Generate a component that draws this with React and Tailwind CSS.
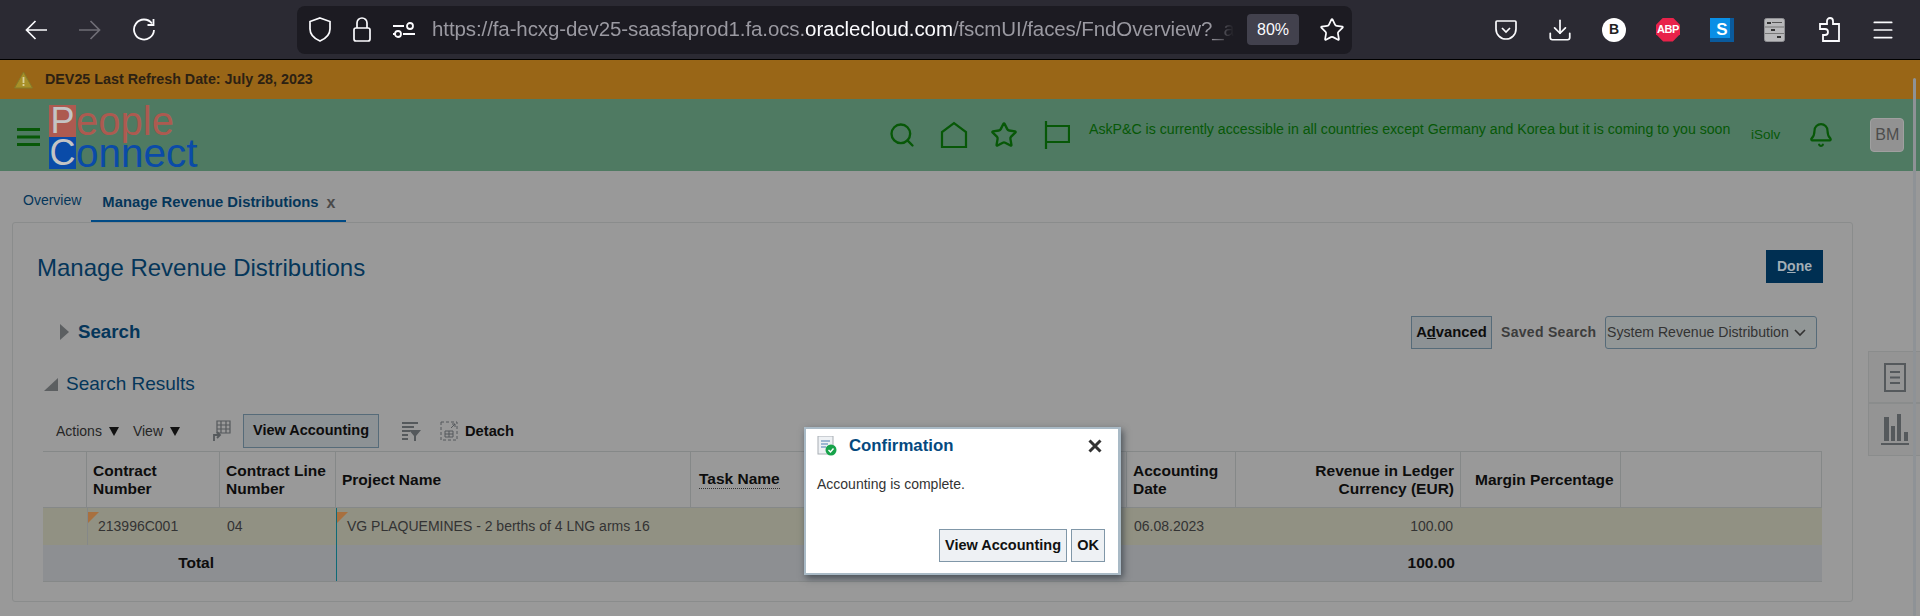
import { Star, Download, Menu, Search, Bell } from "lucide-react";

const cols = "grid grid-cols-[44px_133px_116px_355px_436px_109px_225px_160px_201px]";

function HeadCell({ children, className = "" }) {
  return (
    <div className={`flex items-center border-r border-[#858888] px-[6px] text-[15.5px] leading-[18px] font-bold text-[#0d0d0d] ${className}`}>
      {children}
    </div>
  );
}

function Corner() {
  return <div className="absolute left-0 top-[4px] h-0 w-0 border-t-[11px] border-r-[11px] border-t-[#a8703f] border-r-transparent" />;
}

function TreeIcon() {
  return (
    <svg width="21" height="24" viewBox="0 0 21 24">
      <rect x="0.5" y="0.5" width="20" height="23" rx="2" fill="#b9b9bb" stroke="#8f8f93" />
      <rect x="3" y="4" width="4" height="2" fill="#333" />
      <rect x="8" y="4" width="10" height="1" fill="#555" />
      <rect x="7" y="11" width="4" height="2" fill="#333" />
      <rect x="1" y="8.5" width="19" height="1" fill="#777" />
      <rect x="1" y="15" width="19" height="1" fill="#777" />
      <rect x="13" y="18" width="4" height="2" fill="#333" />
    </svg>
  );
}

export default function App() {
  return (
    <div className="relative h-[616px] w-[1920px] overflow-hidden bg-[#999999] font-['Liberation_Sans',Arial,sans-serif]">
      {/* browser toolbar */}
      <div className="flex h-[60px] items-center border-b border-black bg-[#2b2a33] pl-[25px]">
        <svg width="22" height="20" viewBox="0 0 22 20" fill="none" stroke="#fbfbfe" strokeWidth="1.7">
          <path d="M22 10H2M10.5 1L1.5 10l9 9" />
        </svg>
        <svg width="22" height="20" viewBox="0 0 22 20" fill="none" stroke="#6f6e76" strokeWidth="1.7" className="ml-[32px]">
          <path d="M0 10h20M11.5 1l9 9-9 9" />
        </svg>
        <svg width="22" height="23" viewBox="0 0 22 23" fill="none" stroke="#fbfbfe" strokeWidth="1.8" className="ml-[32px]">
          <path d="M19 5.5A10 10 0 1 0 21 12" />
          <path d="M20.5 1v6h-6" />
        </svg>
        <div className="ml-[142px] flex h-[48px] w-[1055px] items-center rounded-[8px] bg-[#1c1b22] pl-[12px]">
          <svg width="22" height="25" viewBox="0 0 22 25" fill="none" stroke="#fbfbfe" strokeWidth="1.7">
            <path d="M11 1l10 3.5V12c0 6-4 9.5-10 12C5 21.5 1 18 1 12V4.5z" />
          </svg>
          <svg width="18" height="25" viewBox="0 0 18 25" fill="none" stroke="#fbfbfe" strokeWidth="1.7" className="ml-[22px]">
            <path d="M4 11V6a5 5 0 0 1 10 0v5" />
            <rect x="1" y="11" width="16" height="13" rx="2" />
          </svg>
          <svg width="22" height="18" viewBox="0 0 22 18" fill="none" stroke="#fbfbfe" strokeWidth="1.8" className="ml-[22px]">
            <path d="M0 5h11M0 13h2M10 13h12" />
            <circle cx="17" cy="5" r="3" />
            <circle cx="5" cy="13" r="3" />
          </svg>
          <div className="ml-[17px] w-[802px] overflow-hidden whitespace-nowrap text-[20.5px] tracking-[-0.1px] text-[#9a99a1] [mask-image:linear-gradient(to_left,transparent,black_24px)]">
            https://fa-hcxg-dev25-saasfaprod1.fa.ocs.<span className="text-[#fbfbfe]">oraclecloud.com</span>/fscmUI/faces/FndOverview?_a
          </div>
          <div className="ml-[13px] flex h-[31px] w-[52px] items-center justify-center rounded-[4px] bg-[#42414d] text-[16px] text-[#fbfbfe]">80%</div>
          <Star size={26} strokeWidth={1.6} className="ml-[20px] text-[#fbfbfe]" />
        </div>
        <div className="ml-[142px] flex items-center gap-[30px]">
          <svg width="24" height="24" viewBox="0 0 24 24" fill="none" stroke="#fbfbfe" strokeWidth="1.7">
            <path d="M3 3h18a1 1 0 0 1 1 1v7a10 10 0 0 1-20 0V4a1 1 0 0 1 1-1z" />
            <path d="M8 10l4 4 4-4" />
          </svg>
          <Download size={26} strokeWidth={1.6} className="-mx-[1px] text-[#fbfbfe]" />
          <div className="flex h-[24px] w-[24px] items-center justify-center rounded-full bg-white text-[14px] font-bold text-[#222]">B</div>
          <div className="flex h-[24px] w-[24px] items-center justify-center bg-[#e8224a] text-[11px] font-bold tracking-[-0.4px] text-white [clip-path:polygon(30%_0,70%_0,100%_30%,100%_70%,70%_100%,30%_100%,0_70%,0_30%)]">ABP</div>
          <div className="flex h-[24px] w-[24px] items-center justify-center bg-[#0a8fe6] text-[17px] font-bold text-white shadow-[inset_-4px_-4px_0_#0a5a9c]">S</div>
          <TreeIcon />
          <svg width="21" height="25" viewBox="0 0 21 25" fill="none" stroke="#fbfbfe" strokeWidth="1.8" className="ml-[4px]">
            <path d="M8 7V4a3 3 0 0 1 6 0v3h6v17H4v-6h2a3 3 0 0 0 0-6H1V7z" />
          </svg>
          <Menu size={26} strokeWidth={1.6} className="text-[#fbfbfe]" />
        </div>
      </div>

      {/* refresh notice */}
      <div className="flex h-[39px] items-center bg-[#996617] pl-[14px]">
        <svg width="19" height="18" viewBox="0 0 19 18">
          <path d="M9.5 1L18.5 17H.5z" fill="#a89028" stroke="#857a2a" />
          <rect x="8.6" y="6" width="1.8" height="6" fill="#d9cf9a" />
          <rect x="8.6" y="13" width="1.8" height="2" fill="#d9cf9a" />
        </svg>
        <span className="ml-[12px] text-[14.3px] font-bold text-[#2c2113]">DEV25 Last Refresh Date: July 28, 2023</span>
      </div>

      {/* app header */}
      <div className="flex h-[72px] items-center overflow-hidden bg-[#4f7a62] pl-[17px]">
        <svg width="23" height="18" viewBox="0 0 23 18" fill="#075807" className="mt-[3px]">
          <rect width="23" height="3" />
          <rect y="7.5" width="23" height="3" />
          <rect y="15" width="23" height="3" />
        </svg>
        <div className="ml-[9px] flex h-[66px] w-[152px] flex-col self-start pt-[6px]">
          <div className="flex h-[34px] items-start text-[40px] leading-[32px] text-[#ad5a50]">
            <span className="flex h-[32px] w-[27px] items-center justify-center bg-[#ad5a50] text-[36px] text-[#c4c4c4]">P</span>eople
          </div>
          <div className="flex h-[32px] items-start text-[40.5px] leading-[32px] text-[#0a4ba8]">
            <span className="flex h-[32px] w-[27px] items-center justify-center bg-[#0a4ba8] text-[36px] text-[#c4c4c4]">C</span>onnect
          </div>
        </div>
        <div className="ml-[687px] flex items-center text-[#075807]">
          <Search size={28} strokeWidth={2} />
          <svg width="28" height="28" viewBox="0 0 28 28" fill="none" stroke="currentColor" strokeWidth="2.2" className="ml-[24px]">
            <path d="M2 26V11L14 2l12 9v15z" />
          </svg>
          <Star size={28} strokeWidth={2} className="ml-[22px]" />
          <svg width="26" height="28" viewBox="0 0 26 28" fill="none" stroke="currentColor" strokeWidth="2.2" className="ml-[26px]">
            <path d="M2 0v28M2 5h23v16H2" />
          </svg>
          <span className="ml-[19px] mb-[10px] w-[641px] whitespace-nowrap text-[14.15px]">AskP&amp;C is currently accessible in all countries except Germany and Korea but it is coming to you soon</span>
          <span className="ml-[21px] text-[13.5px]">iSolv</span>
          <Bell size={26} strokeWidth={2} className="ml-[28px]" />
          <div className="ml-[36px] flex h-[34px] w-[34px] items-center justify-center rounded-[4px] border border-[#a0a0a0] bg-[#929292] text-[16px] text-[#4d4d4d]">BM</div>
        </div>
      </div>

      {/* tabs */}
      <div className="flex h-[51px] items-end pl-[23px]">
        <span className="mb-[11px] text-[14px] text-[#05365a]">Overview</span>
        <div className="ml-[10px] flex h-[37px] w-[255px] items-start border-b-2 border-[#004a85] pl-[11px] pt-[6px]">
          <span className="text-[14.8px] font-bold text-[#05365a]">Manage Revenue Distributions</span>
          <span className="ml-[8px] text-[16px] font-bold text-[#4a4a4a]">x</span>
        </div>
      </div>

      {/* main panel */}
      <div className="ml-[12px] h-[380px] w-[1841px] rounded-[3px] border border-[#8a8c8c] pl-[24px] pt-[27px]">
        <div className="flex h-[34px] items-start justify-between pr-[29px]">
          <h1 className="mt-[2px] text-[24px] leading-[32px] text-[#05365a]">Manage Revenue Distributions</h1>
          <button className="flex h-[33px] w-[57px] items-center justify-center bg-[#002f52] text-[14px] font-bold text-[#a3aeb6]">
            <span>D<u>o</u>ne</span>
          </button>
        </div>

        <div className="mt-[32px] flex h-[33px] items-center justify-between pr-[35px]">
          <div className="ml-[23px] flex items-center">
            <div className="h-0 w-0 border-y-[8px] border-l-[9px] border-y-transparent border-l-[#5c5f61]" />
            <span className="ml-[9px] text-[18.7px] font-bold text-[#05365a]">Search</span>
          </div>
          <div className="flex items-center">
            <button className="h-[33px] w-[81px] border border-[#566b79] bg-[#8d9295] text-[14.8px] font-bold text-[#0d0d0d]">
              A<u>d</u>vanced
            </button>
            <span className="ml-[9px] w-[104px] text-[14px] font-bold tracking-[0.3px] text-[#3c3c3c]">Saved Search</span>
            <div className="flex h-[33px] w-[212px] items-center justify-between rounded-[3px] border border-[#566b79] bg-[#929797] pl-[1px] pr-[10px] text-[14.1px] text-[#333]">
              <span>System Revenue Distribution</span>
              <svg width="12" height="8" viewBox="0 0 12 8" fill="none" stroke="#333" strokeWidth="1.6">
                <path d="M1 1l5 5 5-5" />
              </svg>
            </div>
          </div>
        </div>

        <div className="ml-[7px] mt-[22px] flex h-[26px] items-center">
          <div className="h-0 w-0 border-b-[13px] border-l-[14px] border-b-[#5c5f61] border-l-transparent" />
          <span className="ml-[8px] text-[19px] text-[#05365a]">Search Results</span>
        </div>

        {/* toolbar */}
        <div className="ml-[6px] mt-[17px] flex h-[34px] items-center">
          <div className="ml-[13px] flex items-center text-[14px] text-[#262626]">
            <span>Actions</span>
            <div className="ml-[7px] h-0 w-0 border-x-[5.5px] border-t-[9px] border-x-transparent border-t-[#111]" />
            <span className="ml-[14px]">View</span>
            <div className="ml-[7px] h-0 w-0 border-x-[5.5px] border-t-[9px] border-x-transparent border-t-[#111]" />
          </div>
          <svg width="20" height="22" viewBox="0 0 20 22" fill="none" stroke="#55595c" strokeWidth="1.2" className="ml-[31px]">
            <path d="M6 1h13v12H6zM6 5h13M6 9h13M10 1v12M15 1v12" />
            <path d="M3 21v-6h6M6 12l3 3-3 3" strokeWidth="1.8" />
          </svg>
          <button className="ml-[12px] h-[34px] w-[136px] border border-[#566b79] bg-[#8d9295] text-[14.5px] font-bold text-[#0d0d0d]">View Accounting</button>
          <svg width="20" height="20" viewBox="0 0 20 20" className="ml-[22px]" fill="#55595c">
            <path d="M1 1h16v2H1zM1 5h12v2H1zM1 9h8v2H1zM1 13h6v2H1zM1 17h6v2H1z" />
            <path d="M8 9h12l-5 6v5h-2v-5z" />
          </svg>
          <svg width="18" height="20" viewBox="0 0 18 20" fill="none" stroke="#55595c" strokeWidth="1" className="ml-[19px]">
            <path d="M1 1h16v18H1z" strokeDasharray="3 2" />
            <path d="M5 10h8v6H5zM5 13h8M9 10v6" />
            <path d="M11 7l4-4M12 3h3v3" />
          </svg>
          <span className="ml-[7px] text-[14.7px] font-bold text-[#0d0d0d]">Detach</span>
        </div>

        {/* results table */}
        <div className="ml-[6px] mt-[3px] w-[1779px]">
          <div className={`${cols} h-[57px] border-y border-[#858888]`}>
            <div className="border-r border-[#858888]" />
            <HeadCell>Contract<br />Number</HeadCell>
            <HeadCell>Contract Line<br />Number</HeadCell>
            <HeadCell>Project Name</HeadCell>
            <HeadCell className="pl-[8px]">
              <span className="border-b border-dotted border-[#333]">Task Name</span>
            </HeadCell>
            <HeadCell>Accounting<br />Date</HeadCell>
            <HeadCell className="justify-end text-right">Revenue in Ledger<br />Currency (EUR)</HeadCell>
            <HeadCell className="pl-[14px]">Margin Percentage</HeadCell>
            <div className="border-r border-[#858888]" />
          </div>
          <div className={`${cols} h-[37px] items-center bg-[#919183] text-[14px] text-[#333]`}>
            <div />
            <div className="relative flex h-full items-center border-l border-[#858888] pl-[10px]">
              <Corner />
              213996C001
            </div>
            <div className="pl-[7px]">04</div>
            <div className="relative flex h-full items-center border-l border-[#0e6a78] pl-[10px]">
              <Corner />
              VG PLAQUEMINES - 2 berths of 4 LNG arms 16
            </div>
            <div />
            <div className="pl-[7px]">06.08.2023</div>
            <div className="pr-[8px] text-right">100.00</div>
            <div />
            <div />
          </div>
          <div className={`${cols} h-[37px] items-center border-b border-[#858888] bg-[#8d8f92] text-[15.5px] font-bold text-[#0d0d0d]`}>
            <div className="col-span-2 pr-[6px] text-right">Total</div>
            <div />
            <div className="h-full border-l border-[#0e6a78]" />
            <div />
            <div />
            <div className="pr-[6px] text-right">100.00</div>
            <div />
            <div />
          </div>
        </div>
      </div>

      {/* right rail */}
      <div className="absolute left-[1868px] top-[351px] flex h-[105px] w-[52px] flex-col border border-r-0 border-[#8a8c8c] bg-[#949494]">
        <div className="flex h-[52px] items-center justify-center border-b-2 border-[#8a8c8c]">
          <svg width="22" height="29" viewBox="0 0 22 29" fill="none" stroke="#55595c" strokeWidth="2">
            <path d="M1 1h20v27H1zM6 9h10M6 14.5h10M6 20h10" />
          </svg>
        </div>
        <div className="flex flex-1 items-center justify-center">
          <svg width="28" height="32" viewBox="0 0 28 32" fill="#55595c">
            <rect x="3" y="3" width="5" height="24" />
            <rect x="10" y="12" width="4" height="15" />
            <rect x="16" y="0" width="4" height="27" />
            <rect x="23" y="18" width="4" height="9" />
            <rect y="29" width="28" height="2" />
          </svg>
        </div>
      </div>

      {/* page scrollbar */}
      <div className="absolute left-[1913px] top-[78px] h-[538px] w-[3px] rounded-full bg-[#8e9296]" />

      {/* confirmation dialog */}
      <div className="absolute left-[804px] top-[427px] flex h-[148px] w-[317px] flex-col border-2 border-r-[3px] border-[#a9bac6] bg-white pl-[11px] pr-[13px] shadow-[2px_3px_7px_rgba(40,50,60,0.7)]">
        <div className="mt-[5px] flex h-[24px] items-center justify-between">
          <div className="flex items-center">
            <svg width="20" height="20" viewBox="0 0 20 20">
              <rect x="1" y="0" width="15" height="18" fill="#eef1f4" stroke="#a8aeb4" />
              <path d="M4 5h9M4 8h7M4 11h5" stroke="#4d7fb0" strokeWidth="1.2" />
              <circle cx="14" cy="14" r="5.5" fill="#17a34a" />
              <path d="M11.5 14l2 2 3-3.5" fill="none" stroke="#fff" strokeWidth="1.4" />
            </svg>
            <span className="ml-[12px] text-[16.8px] font-bold text-[#04497f]">Confirmation</span>
          </div>
          <svg width="14" height="14" viewBox="0 0 14 14" stroke="#333" strokeWidth="3" className="mr-[3px]">
            <path d="M1.5 1.5l11 11M12.5 1.5l-11 11" />
          </svg>
        </div>
        <p className="mt-[16px] text-[14px] text-[#333]">Accounting is complete.</p>
        <div className="mt-auto mb-[11px] flex justify-end gap-[4px]">
          <button className="h-[33px] w-[128px] border border-[#8097a8] bg-[#eef1f4] text-[14.5px] font-bold text-[#111]">View Accounting</button>
          <button className="h-[33px] w-[34px] border border-[#8097a8] bg-[#eef1f4] text-[14.5px] font-bold text-[#111]">OK</button>
        </div>
      </div>
    </div>
  );
}
